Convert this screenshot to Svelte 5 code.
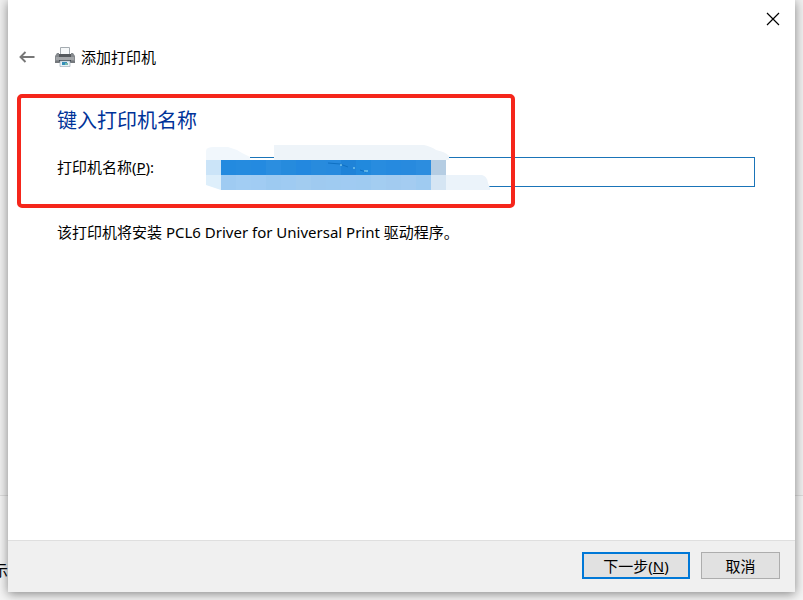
<script lang="ts">
  let printerName: string = $state('');

  const strongCells = ['#238adf', '#258bdf', '#248ae0', '#2b8ee0', '#268bdd', '#2388df', '#288bdd', '#278ade', '#1f83d8', '#2189dd', '#288cdf', '#268adf', '#288ade', '#2c8ddf'];
  const softCells = ['#9fcbf2', '#a2cdf3', '#a1ccf3', '#9dcaf1', '#9fcbf2', '#a2ccf0', '#9fcaf0', '#9fcbf1', '#a0cbf2', '#9fcbf1', '#a3cdf1', '#a2cbf0', '#a4ccf1', '#9fcbf1'];
</script>

<div class="desktop">
  <span class="behind" aria-hidden="true">示:</span>

  <main class="wizard">
    <div class="titlebar">
      <button class="close" type="button" aria-label="关闭">
        <svg width="14" height="14" viewBox="0 0 14 14">
          <path d="M1 1L13 13M13 1L1 13" stroke="#000" stroke-width="1.2" fill="none" />
        </svg>
      </button>
    </div>

    <header class="header">
      <button class="back" type="button" aria-label="返回">
        <svg width="16" height="12" viewBox="0 0 16 12">
          <path d="M15.5 6H1.5M6.5 1L1.5 6L6.5 11" stroke="#777" stroke-width="1.9" fill="none" />
        </svg>
      </button>
      <svg class="printer" width="20" height="20" viewBox="0 0 20 20" aria-hidden="true">
        <path d="M5.5 0.5H14.5V9H5.5Z" fill="#f6f8f9" stroke="#a4abb0" />
        <path d="M2 6H4V8H16V6H18L20 9V15H0V9Z" fill="#85898d" />
        <path d="M4 7H16V10H4Z" fill="#54585c" />
        <path d="M1 10H19V13H1Z" fill="#a3a6a9" />
        <path d="M0 14H20V16H0Z" fill="#75797d" />
        <path d="M4 13H16V15H4Z" fill="#414950" />
        <path d="M5 14H15V19.5H5Z" fill="#e8f2f8" stroke="#a0afb9" stroke-width="0.7" />
        <path d="M7 15H12V18H7Z" fill="#348fb8" />
        <path d="M10 16H13V18H10Z" fill="#76b9ac" />
      </svg>
      <span class="title">添加打印机</span>
    </header>

    <section class="content">
      <h1>键入打印机名称</h1>
      <div class="field">
        <label for="printer-name">打印机名称(<u>P</u>):</label>
        <div class="input-wrap">
          <input id="printer-name" type="text" bind:value={printerName} />
          <svg class="mosaic" width="284" height="46" viewBox="0 0 284 46" aria-hidden="true">
            <path d="M0 6Q0 2 8 2H22Q30 4 36 8L44 12V15H0Z" fill="#f1f7fc" />
            <path d="M68 0H218Q226 2 230 5Q240 7 243 11V15H68Z" fill="#eef4f9" />
            <path d="M0 15H15V45L0 40Z" fill="#deeffb" />
            <path d="M0 15H15V30H0Z" fill="#cbe4f8" />
            {#each strongCells as color, i}
              <rect x={15 + i * 15} y="15" width="15" height="15" fill={color} />
            {/each}
            {#each softCells as color, i}
              <rect x={15 + i * 15} y="30" width="15" height="15" fill={color} />
            {/each}
            <path d="M225 15H240V30H225Z" fill="#b5cde3" />
            <path d="M225 30H240V45H225Z" fill="#d5e5f3" />
            <path d="M240 30H276Q281 31 282 38L284 43V45H240Z" fill="#ebf3fa" />
            <path d="M122 18L134 19L142 22M154 25L160 27" stroke="#0f70c2" fill="none" />
            <path d="M134 20H136M147 23H149M158 26H162" stroke="#9de1f5" fill="none" />
          </svg>
        </div>
      </div>
      <p>该打印机将安装 PCL6 Driver for Universal Print 驱动程序。</p>
      <div class="highlight"></div>
    </section>

    <footer class="footer">
      <button class="btn primary" type="button">下一步(<u>N</u>)</button>
      <button class="btn" type="button">取消</button>
    </footer>
  </main>
</div>

<style>
  :global(body) {
    margin: 0;
    background: #f0f0f0;
  }

  .desktop {
    position: relative;
    box-sizing: border-box;
    min-height: 100vh;
    padding: 0 8px 8px;
    display: flex;
    overflow: hidden;
    background: linear-gradient(#f0f0f0 495px, #dcdcdc 495px, #dcdcdc 496px, #f4f4f4 496px);
    font-family: "Noto Sans", "Noto Sans CJK SC", sans-serif;
    font-size: 15px;
    line-height: 20px;
    color: #000;
  }

  .behind {
    position: absolute;
    left: -7px;
    bottom: 20px;
  }

  .wizard {
    position: relative;
    flex: 1;
    display: flex;
    flex-direction: column;
    background: #fff;
    box-shadow: 0 2px 10px rgba(0, 0, 0, 0.45);
  }

  button {
    font: inherit;
    color: inherit;
    padding: 0;
  }

  .titlebar {
    display: flex;
    justify-content: flex-end;
    height: 38px;
  }

  .close,
  .back {
    display: flex;
    align-items: center;
    justify-content: center;
    border: none;
    background: transparent;
  }

  .close {
    width: 44px;
  }

  .header {
    display: flex;
    align-items: center;
    height: 38px;
    padding-left: 11px;
  }

  .printer {
    margin: 0 6px 0 20px;
  }

  .content {
    position: relative;
    flex: 1;
    padding: 30px 40px 30px 49px;
  }

  h1 {
    margin: 0;
    font-size: 20px;
    line-height: 30px;
    font-weight: 400;
    color: #003399;
  }

  .field {
    display: flex;
    align-items: center;
    margin-top: 21px;
  }

  label {
    width: 163px;
    margin-top: -10px;
  }

  .input-wrap {
    position: relative;
    flex: 1;
  }

  input {
    display: block;
    box-sizing: border-box;
    width: 100%;
    height: 30px;
    padding: 0 8px;
    border: 1px solid #1a74b8;
    border-radius: 0;
    outline: none;
    background: #fff;
    font: inherit;
  }

  .mosaic {
    position: absolute;
    top: -12px;
    left: -14px;
  }

  p {
    margin: 35px 0 0;
  }

  .highlight {
    position: absolute;
    top: 18px;
    left: 9px;
    box-sizing: border-box;
    width: 498px;
    height: 114px;
    border: 4px solid #f5261b;
    border-radius: 5px;
    pointer-events: none;
  }

  .footer {
    display: flex;
    justify-content: flex-end;
    gap: 11px;
    padding: 11px 15px 13px;
    border-top: 1px solid #dfdfdf;
    background: #f0f0f0;
  }

  .btn {
    box-sizing: border-box;
    width: 79px;
    height: 27px;
    border: 1px solid #adadad;
    background: #e1e1e1;
  }

  .primary {
    width: 108px;
    border: 2px solid #0078d7;
  }
</style>
